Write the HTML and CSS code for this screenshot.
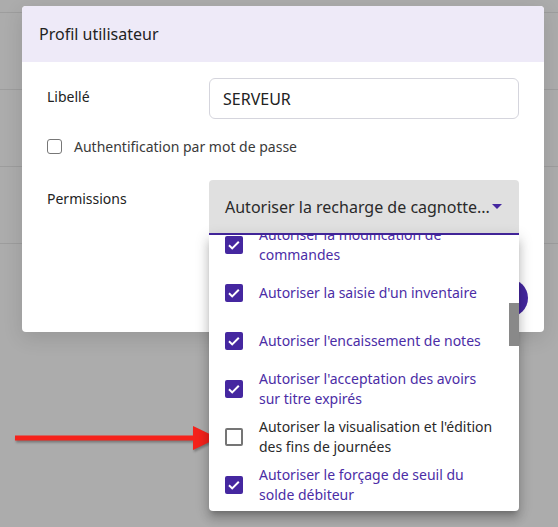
FILE: index.html
```html
<!DOCTYPE html>
<html lang="fr">
<head>
    <meta charset="UTF-8">
    <title>Profil utilisateur</title>
    <link rel="stylesheet" href="styles.css">
</head>
<body>
    <div class="page-rows">
        <div class="page-row"></div>
        <div class="page-row"></div>
        <div class="page-row"></div>
        <div class="page-row"></div>
    </div>

    <div class="dialog">
        <div class="dialog-header">Profil utilisateur</div>
        <div class="dialog-body">
            <div class="form-row">
                <label class="form-label">Libellé</label>
                <input class="text-input" type="text" value="SERVEUR">
            </div>
            <div class="check-row">
                <span class="native-check"></span>
                <span>Authentification par mot de passe</span>
            </div>
            <div class="form-row permissions-row">
                <label class="form-label">Permissions</label>
                <div class="select">
                    <div class="select-trigger">
                        <span class="select-value">Autoriser la recharge de cagnotte...</span>
                        <span class="select-arrow"></span>
                    </div>
                    <div class="select-panel">
                        <ul class="option-list">
                            <li class="option selected">
                                <span class="box"><svg viewBox="0 0 18 18"><path d="M4 9.3l3.2 3.1 6.6-6.6"/></svg></span>
                                <span class="option-text">Autoriser la modification de commandes</span>
                            </li>
                            <li class="option selected">
                                <span class="box"><svg viewBox="0 0 18 18"><path d="M4 9.3l3.2 3.1 6.6-6.6"/></svg></span>
                                <span class="option-text">Autoriser la saisie d'un inventaire</span>
                            </li>
                            <li class="option selected">
                                <span class="box"><svg viewBox="0 0 18 18"><path d="M4 9.3l3.2 3.1 6.6-6.6"/></svg></span>
                                <span class="option-text">Autoriser l'encaissement de notes</span>
                            </li>
                            <li class="option selected">
                                <span class="box"><svg viewBox="0 0 18 18"><path d="M4 9.3l3.2 3.1 6.6-6.6"/></svg></span>
                                <span class="option-text">Autoriser l'acceptation des avoirs sur titre expirés</span>
                            </li>
                            <li class="option">
                                <span class="box"></span>
                                <span class="option-text">Autoriser la visualisation et l'édition des fins de journées</span>
                            </li>
                            <li class="option selected">
                                <span class="box"><svg viewBox="0 0 18 18"><path d="M4 9.3l3.2 3.1 6.6-6.6"/></svg></span>
                                <span class="option-text">Autoriser le forçage de seuil du solde débiteur</span>
                            </li>
                        </ul>
                        <div class="scroll-thumb"></div>
                    </div>
                </div>
            </div>
        </div>
        <div class="dialog-footer">
            <button class="fab"></button>
        </div>
    </div>

    <svg class="red-arrow" width="230" height="40" viewBox="0 0 230 40">
        <rect x="15" y="9.5" width="182" height="5" fill="#f5221b"/>
        <polygon points="193,0 218,12 193,24" fill="#f5221b"/>
    </svg>
</body>
</html>
```

FILE: styles.css
```css
body {
    margin: 0;
    width: 558px;
    height: 527px;
    overflow: hidden;
    position: relative;
    background-color: #acacac;
    font-family: "Noto Sans", sans-serif;
    color: #222;
}

/* page behind the backdrop */
.page-rows {
    padding-top: 12px;
}
.page-row {
    height: 76px;
    border-top: 1px solid #9d9d9d;
}

.dialog {
    position: absolute;
    left: 22px;
    top: 6px;
    width: 522px;
    background: #fff;
    border-radius: 4px;
    box-shadow: 0 6px 20px rgba(0, 0, 0, 0.12);
}
.dialog-header {
    height: 56px;
    display: flex;
    align-items: center;
    padding: 0 17px;
    background-color: #eeeaf8;
    border-radius: 4px 4px 0 0;
    font-size: 16px;
}
.dialog-body {
    padding: 16px 25px 0;
}
.form-row {
    display: flex;
    align-items: flex-start;
}
.form-label {
    width: 162px;
    flex-shrink: 0;
    padding-top: 9px;
    font-size: 14px;
    line-height: 20px;
}
.text-input {
    flex: 1;
    height: 41px;
    box-sizing: border-box;
    margin: 0;
    padding: 0 13px;
    border: 1px solid #d5d5dd;
    border-radius: 6px;
    font-family: inherit;
    font-size: 16px;
    color: #222;
    outline: none;
}
.check-row {
    display: flex;
    align-items: center;
    height: 20px;
    margin-top: 17px;
    font-size: 14px;
    color: #3a3a3a;
}
.native-check {
    width: 13px;
    height: 13px;
    border: 1px solid #777;
    border-radius: 3px;
    margin-right: 12px;
}
.permissions-row {
    margin-top: 24px;
}

.select {
    flex: 1;
    position: relative;
}
.select-trigger {
    height: 53px;
    display: flex;
    align-items: center;
    padding: 0 17px 0 16px;
    background-color: #e0e0e0;
    border-radius: 4px 4px 0 0;
    border-bottom: 2px solid #4527a0;
    font-size: 16px;
    color: #2a2a2a;
}
.select-value {
    white-space: nowrap;
}
.select-arrow {
    margin-left: auto;
    width: 0;
    height: 0;
    border-left: 5px solid transparent;
    border-right: 5px solid transparent;
    border-top: 5px solid #4527a0;
}
.select-panel {
    position: absolute;
    top: 100%;
    left: 0;
    right: 0;
    height: 276px;
    overflow: hidden;
    background: #fff;
    border-radius: 0 0 4px 4px;
    box-shadow: 0 5px 5px -3px rgba(0, 0, 0, 0.2), 0 8px 10px 1px rgba(0, 0, 0, 0.14), 0 3px 14px 2px rgba(0, 0, 0, 0.12);
    z-index: 2;
}
.option-list {
    list-style: none;
    margin: -14px 0 0;
    padding: 0;
}
.option {
    height: 48px;
    display: flex;
    align-items: center;
    padding: 0 20px 0 16px;
    font-size: 14px;
    line-height: 20px;
    color: #2a2a2a;
}
.option.selected {
    color: #4b2da6;
}
.box {
    width: 18px;
    height: 18px;
    flex-shrink: 0;
    box-sizing: border-box;
    margin-right: 16px;
    border: 2px solid #757575;
    border-radius: 2px;
}
.option.selected .box {
    border: none;
    background-color: #4527a0;
}
.box svg {
    display: block;
    width: 18px;
    height: 18px;
    fill: none;
    stroke: #fff;
    stroke-width: 2;
}
.scroll-thumb {
    position: absolute;
    right: 0;
    top: 68px;
    width: 10px;
    height: 43px;
    background-color: #898989;
}

.dialog-footer {
    display: flex;
    justify-content: flex-end;
    margin-top: 44px;
    padding: 0 16px 15px;
}
.fab {
    width: 38px;
    height: 38px;
    border: none;
    border-radius: 50%;
    background-color: #4527a0;
}

.red-arrow {
    position: absolute;
    left: 0;
    top: 426px;
    filter: drop-shadow(1px 2px 1px rgba(0, 0, 0, 0.3));
}
```
